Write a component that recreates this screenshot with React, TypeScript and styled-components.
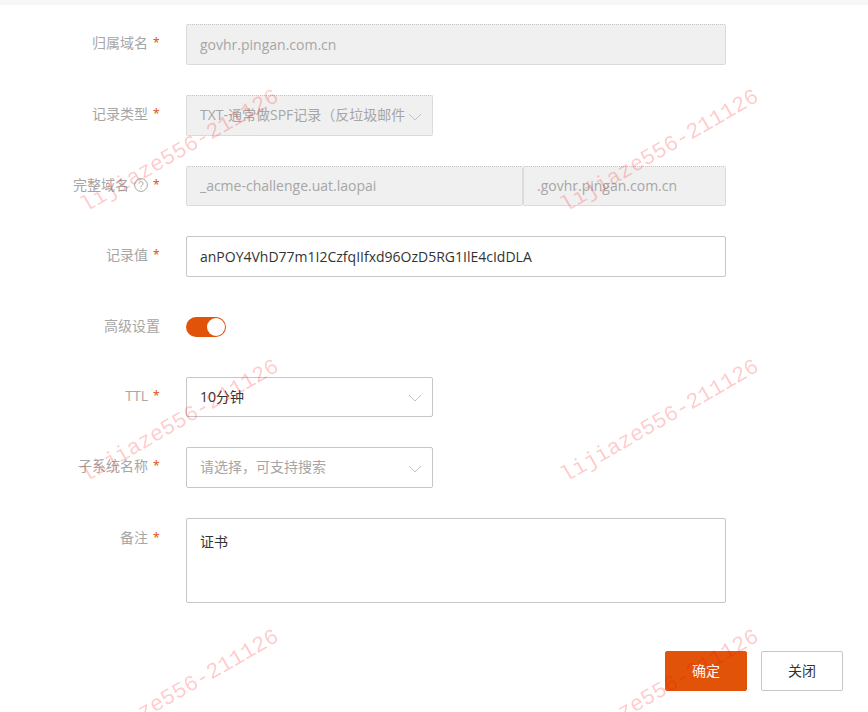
import React from 'react';
import styled, { createGlobalStyle, css } from 'styled-components';

const ACCENT = '#e2530a';
const LINE = '#c6c6c6';

const GlobalStyle = createGlobalStyle`
  *, *::before, *::after { box-sizing: border-box; }
  body {
    margin: 0;
    background: #fff;
    color: #333;
    font-family: "Open Sans", "Noto Sans CJK SC", sans-serif;
    font-size: 14px;
    line-height: 20px;
  }
  input, select, textarea, button { font: inherit; color: inherit; margin: 0; }
`;

const Page = styled.main`
  position: relative;
  min-height: 100vh;
  overflow: hidden;
  border-top: 5px solid #f7f7f7;
`;

const Form = styled.form`
  display: flex;
  flex-direction: column;
  gap: 30px;
  padding: 19px 25px 21px 0;
`;

const Row = styled.div<{ $top?: boolean }>`
  display: grid;
  grid-template-columns: 160px minmax(0, 540px);
  column-gap: 26px;
  align-items: ${(p) => (p.$top ? 'start' : 'center')};
  min-height: 40px;
`;

const LabelCell = styled.div<{ $top?: boolean }>`
  display: flex;
  justify-content: flex-end;
  align-items: center;
  gap: 5px;
  padding: ${(p) => (p.$top ? '10px 0 0' : '0 0 3px')};
  color: #a6a6a6;
  white-space: nowrap;
`;

const Star = styled.span`
  width: 7px;
  color: ${ACCENT};
  font-family: "Noto Sans", sans-serif;
  font-size: 12px;
`;

const HelpIcon = styled.svg`
  width: 14px;
  height: 14px;
  flex: none;
`;

const fieldStyle = css`
  display: block;
  width: 100%;
  border: 1px solid ${LINE};
  border-radius: 2px;
  background: #fff;
  outline: none;

  &:disabled {
    background: #f0f0f0;
    border: 1px dotted ${LINE};
    color: #a6a6a6;
    opacity: 1;
  }
`;

const TextInput = styled.input<{ $compact?: boolean }>`
  ${fieldStyle}
  height: ${(p) => (p.$compact ? 40 : 41)}px;
  padding: 0 13px 1px;
`;

const TextArea = styled.textarea`
  ${fieldStyle}
  height: 85px;
  padding: 13px;
  resize: none;
`;

const Split = styled.div`
  display: grid;
  grid-template-columns: minmax(0, 1fr) 203px;
`;

const SelectBox = styled.div`
  position: relative;
  max-width: 247px;
`;

const Select = styled.select<{ $compact?: boolean; $empty?: boolean }>`
  ${fieldStyle}
  height: ${(p) => (p.$compact ? 40 : 41)}px;
  padding: 0 27px 1px 13px;
  appearance: none;
  color: ${(p) => (p.$empty ? '#a6a6a6' : '#333')};
`;

const Chevron = styled.svg`
  position: absolute;
  right: 11px;
  top: 50%;
  width: 14px;
  height: 8px;
  margin-top: -3px;
  pointer-events: none;
`;

const Switch = styled.input`
  display: block;
  appearance: none;
  width: 40px;
  height: 20px;
  margin: 0;
  padding: 1px;
  border-radius: 10px;
  background: #ccc;
  cursor: pointer;

  &::before {
    content: '';
    display: block;
    width: 18px;
    height: 18px;
    border-radius: 50%;
    background: #fff;
  }
  &:checked { background: ${ACCENT}; }
  &:checked::before { margin-left: auto; }
`;

const Actions = styled.div`
  display: flex;
  justify-content: flex-end;
  gap: 14px;
  margin-top: 18px;
`;

const Button = styled.button<{ $primary?: boolean }>`
  height: 40px;
  padding: 0 26px;
  border: 1px solid ${(p) => (p.$primary ? ACCENT : LINE)};
  border-radius: 2px;
  background: ${(p) => (p.$primary ? ACCENT : '#fff')};
  color: ${(p) => (p.$primary ? '#fff' : '#333')};
  cursor: pointer;
`;

const WatermarkLayer = styled.div`
  position: fixed;
  inset: 0;
  overflow: hidden;
  pointer-events: none;
  display: grid;
  grid-template-columns: repeat(2, 480px);
  grid-auto-rows: 270px;
`;

const WatermarkTile = styled.div`
  display: flex;
  align-items: center;
  justify-content: center;
  padding: 34px 120px 0 0;
`;

const WatermarkText = styled.span`
  color: rgba(255, 0, 0, 0.2);
  font-family: "Liberation Mono", monospace;
  font-size: 22px;
  line-height: 24px;
  white-space: nowrap;
  transform: rotate(-30deg);
`;

function Arrow() {
  return (
    <Chevron viewBox="0 0 14 8" fill="none" stroke="#c4c4c4" aria-hidden="true">
      <path d="M1 1l6 6 6-6" />
    </Chevron>
  );
}

type FieldProps = {
  label: string;
  htmlFor: string;
  required?: boolean;
  help?: boolean;
  top?: boolean;
  children: React.ReactNode;
};

function Field({ label, htmlFor, required = true, help, top, children }: FieldProps) {
  return (
    <Row $top={top}>
      <LabelCell $top={top}>
        <label htmlFor={htmlFor}>{label}</label>
        {help && (
          <HelpIcon viewBox="0 0 14 14" fill="none" stroke="#a6a6a6" aria-hidden="true">
            <circle cx="7" cy="7" r="6.4" />
            <path d="M5 5.6a2 2 0 1 1 3 1.7c-.7.4-1 .7-1 1.5M7 9.8v1" />
          </HelpIcon>
        )}
        {required && <Star>*</Star>}
      </LabelCell>
      {children}
    </Row>
  );
}

export default function App() {
  return (
    <>
      <GlobalStyle />
      <Page>
        <Form onSubmit={(e) => e.preventDefault()}>
          <Field label="归属域名" htmlFor="domain">
            <TextInput id="domain" defaultValue="govhr.pingan.com.cn" disabled />
          </Field>
          <Field label="记录类型" htmlFor="type">
            <SelectBox>
              <Select id="type" $empty disabled>
                <option>TXT-通常做SPF记录（反垃圾邮件）</option>
              </Select>
              <Arrow />
            </SelectBox>
          </Field>
          <Field label="完整域名" htmlFor="host" help>
            <Split>
              <TextInput id="host" $compact defaultValue="_acme-challenge.uat.laopai" disabled />
              <TextInput $compact aria-label="域名后缀" defaultValue=".govhr.pingan.com.cn" disabled />
            </Split>
          </Field>
          <Field label="记录值" htmlFor="value">
            <TextInput id="value" defaultValue="anPOY4VhD77m1I2CzfqIIfxd96OzD5RG1IlE4cIdDLA" />
          </Field>
          <Field label="高级设置" htmlFor="advanced" required={false}>
            <Switch id="advanced" type="checkbox" role="switch" defaultChecked />
          </Field>
          <Field label="TTL" htmlFor="ttl">
            <SelectBox>
              <Select id="ttl" $compact>
                <option>10分钟</option>
              </Select>
              <Arrow />
            </SelectBox>
          </Field>
          <Field label="子系统名称" htmlFor="subsystem">
            <SelectBox>
              <Select id="subsystem" $empty>
                <option>请选择，可支持搜索</option>
              </Select>
              <Arrow />
            </SelectBox>
          </Field>
          <Field label="备注" htmlFor="remark" top>
            <TextArea id="remark" defaultValue="证书" />
          </Field>
          <Actions>
            <Button type="submit" $primary>确定</Button>
            <Button type="button">关闭</Button>
          </Actions>
        </Form>
        <WatermarkLayer aria-hidden="true">
          {Array.from({ length: 6 }, (_, i) => (
            <WatermarkTile key={i}>
              <WatermarkText>lijiaze556-211126</WatermarkText>
            </WatermarkTile>
          ))}
        </WatermarkLayer>
      </Page>
    </>
  );
}
